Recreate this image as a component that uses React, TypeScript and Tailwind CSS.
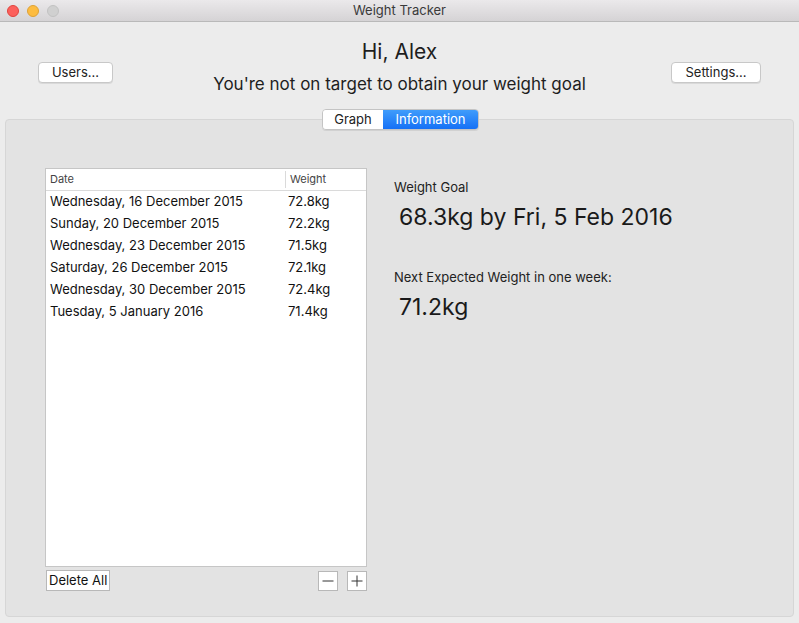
import React from "react";

const ROWS: [string, string][] = [
  ["Wednesday, 16 December 2015", "72.8kg"],
  ["Sunday, 20 December 2015", "72.2kg"],
  ["Wednesday, 23 December 2015", "71.5kg"],
  ["Saturday, 26 December 2015", "72.1kg"],
  ["Wednesday, 30 December 2015", "72.4kg"],
  ["Tuesday, 5 January 2016", "71.4kg"],
];

const FONT = { fontFamily: "Inter, 'Noto Sans', sans-serif" };

function MacButton({ children, className = "" }: { children: React.ReactNode; className?: string }) {
  return (
    <button
      type="button"
      className={`h-[21px] rounded-[4px] border border-[#c8c8c8] bg-white text-[13px] leading-none text-[#222] shadow-[0_1px_0_rgba(0,0,0,0.08)] ${className}`}
    >
      {children}
    </button>
  );
}

export default function App() {
  return (
    <div className="flex h-[623px] w-[799px] flex-col overflow-hidden bg-[#ececec] text-[#222]" style={FONT}>
      {/* title bar */}
      <div className="relative flex h-[22px] shrink-0 items-center justify-center border-b border-[#b9b9b9] bg-gradient-to-b from-[#ebe9eb] to-[#d5d3d5]">
        <div className="absolute left-[7px] top-[5px] flex gap-[8px]">
          <span className="h-[12px] w-[12px] rounded-full border border-[#e0443e] bg-[#fc605c]" />
          <span className="h-[12px] w-[12px] rounded-full border border-[#dea236] bg-[#fdbc40]" />
          <span className="h-[12px] w-[12px] rounded-full border border-[#c2c2c2] bg-[#d0d0d0]" />
        </div>
        <span className="text-[13px] text-[#3a3a3a]">Weight Tracker</span>
      </div>

      {/* header */}
      <div className="grid h-[97px] shrink-0 grid-cols-[1fr_auto_1fr] items-start px-[38px]">
        <MacButton className="mt-[40px] w-[75px] justify-self-start">Users...</MacButton>
        <div className="flex flex-col items-center pt-[17px]">
          <div className="text-[21px] leading-[26px] text-[#1e1e1e]">Hi, Alex</div>
          <div className="mt-[8px] text-[17px] leading-[22px] text-[#1e1e1e]">
            You're not on target to obtain your weight goal
          </div>
        </div>
        <MacButton className="mt-[40px] w-[90px] justify-self-end">Settings...</MacButton>
      </div>

      {/* tab panel */}
      <div className="relative mx-[5px] mb-[6px] flex-1 rounded-[4px] border border-[#d6d6d6] bg-[#e3e3e3]">
        <div className="absolute left-[316px] top-[-11px] flex h-[21px] overflow-hidden rounded-[4px] border border-[#c4c4c4] text-[13px] leading-none shadow-[0_1px_0_rgba(0,0,0,0.08)]">
          <div className="flex w-[60px] items-center justify-center bg-white text-[#222]">Graph</div>
          <div className="flex w-[95px] items-center justify-center bg-gradient-to-b from-[#3f9cfb] to-[#1570f6] text-white">
            Information
          </div>
        </div>

        <div className="flex gap-[27px] pl-[39px] pt-[48px]">
          {/* table */}
          <div className="flex flex-col">
            <div className="flex h-[399px] w-[322px] flex-col border border-[#c6c6c6] bg-white">
              <div className="flex h-[22px] shrink-0 items-center border-b border-[#dadada] text-[11px] text-[#444]">
                <div className="w-[239px] pl-[4px]">Date</div>
                <div className="flex h-[17px] items-center border-l border-[#dadada] pl-[4px]">Weight</div>
              </div>
              <div className="flex flex-col">
                {ROWS.map(([d, w]) => (
                  <div key={d} className="flex h-[22px] items-center text-[13px] text-[#111]">
                    <div className="w-[239px] pl-[4px]">{d}</div>
                    <div className="pl-[3px]">{w}</div>
                  </div>
                ))}
              </div>
            </div>
            <div className="mt-[3px] flex items-start">
              <button
                type="button"
                className="ml-[1px] h-[21px] border border-[#b8b8b8] bg-white px-[2px] text-[13px] leading-none text-[#111]"
              >
                Delete All
              </button>
              <div className="ml-auto mt-[1px] flex gap-[9px]">
                <button type="button" className="flex h-[20px] w-[20px] items-center justify-center border border-[#b8b8b8] bg-white">
                  <svg width="12" height="12" viewBox="0 0 12 12">
                    <path d="M0.5 6h11" stroke="#333" strokeWidth="1" />
                  </svg>
                </button>
                <button type="button" className="flex h-[20px] w-[20px] items-center justify-center border border-[#b8b8b8] bg-white">
                  <svg width="12" height="12" viewBox="0 0 12 12">
                    <path d="M0.5 6h11M6 0.5v11" stroke="#333" strokeWidth="1" />
                  </svg>
                </button>
              </div>
            </div>
          </div>

          {/* info */}
          <div className="flex flex-col pt-[11px]">
            <div className="text-[13px] leading-[16px] text-[#222]">Weight Goal</div>
            <div className="ml-[5px] mt-[8px] text-[23px] leading-[28px] text-[#1a1a1a]">68.3kg by Fri, 5 Feb 2016</div>
            <div className="mt-[38px] text-[13px] leading-[16px] text-[#222]">Next Expected Weight in one week:</div>
            <div className="ml-[5px] mt-[8px] text-[23px] leading-[28px] text-[#1a1a1a]">71.2kg</div>
          </div>
        </div>
      </div>
    </div>
  );
}
